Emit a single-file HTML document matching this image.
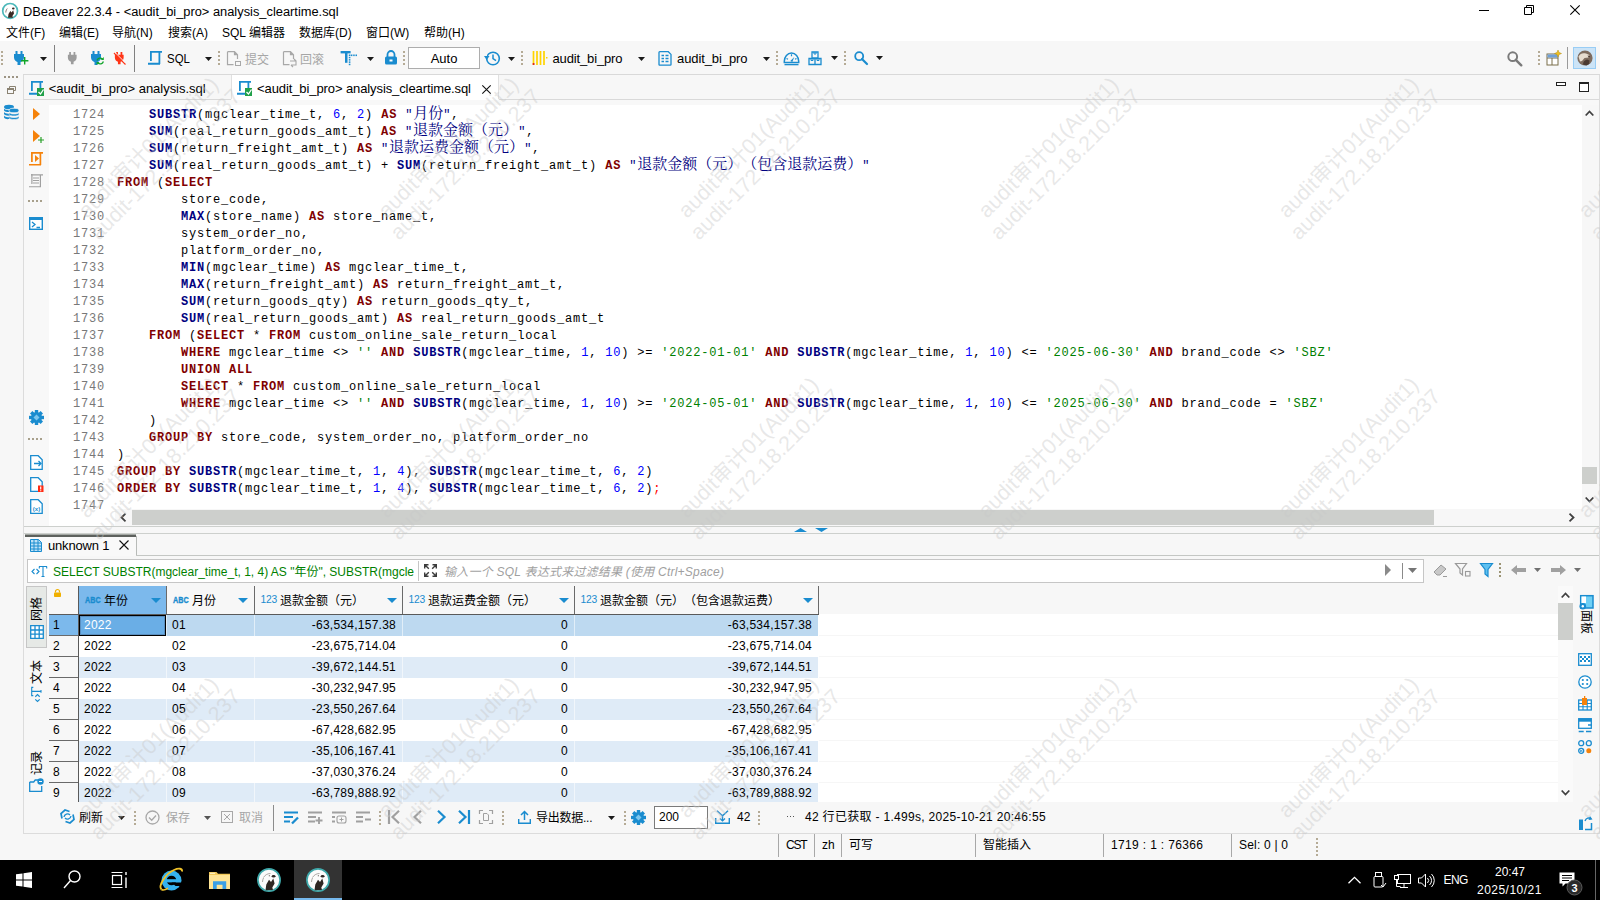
<!DOCTYPE html>
<html lang="zh"><head><meta charset="utf-8"><title>DBeaver</title><style>
*{box-sizing:border-box;margin:0;padding:0}
html,body{width:1600px;height:900px;overflow:hidden;background:#f7f7f7}
body{font-family:"Liberation Sans","Noto Sans CJK SC",sans-serif;font-size:12px;color:#000;position:relative;text-spacing-trim:space-all}
.abs,.t{position:absolute}
.t{white-space:nowrap;line-height:16px;height:16px}
svg{position:absolute;overflow:visible}
#title{left:0;top:0;width:1600px;height:23px;background:#fff}
#menu{left:0;top:23px;width:1600px;height:18px;background:#fff}
#toolbar{left:0;top:41px;width:1600px;height:33px;background:#f7f7f7}
.hl{background:#d4d4d4;height:1px}
.vl{background:#a0a0a0;width:1px}
.code{font-family:"Liberation Mono","Noto Serif CJK SC",monospace;font-size:12px;letter-spacing:0.8px;line-height:17px;height:17px;white-space:pre;position:absolute;color:#000}
.code .k{color:#800000;font-weight:bold}
.code .f{color:#000080;font-weight:bold}
.code .n{color:#0000ff}
.code .s{color:#008000}
.code .q{color:#000080}
.code .c{font-size:15px;letter-spacing:0;line-height:0;text-spacing-trim:space-all;font-kerning:none;font-feature-settings:"chws" 0,"halt" 0,"palt" 0}
.code .r{color:#ff0000}
.ln{color:#787878}
.dis{color:#a0a0a0}
.cell{position:absolute;height:21px;line-height:20px;white-space:nowrap;font-size:12px;letter-spacing:0.25px}
.wm{position:absolute;width:300px;height:48px;text-align:center;color:rgba(200,200,200,0.42);font-size:21.4px;line-height:24px;white-space:nowrap;transform:rotate(-45deg);transform-origin:50% 50%;font-family:"Liberation Sans","Noto Sans CJK SC",sans-serif}
</style></head><body>
<div id="title" class="abs"></div>
<div id="menu" class="abs"></div>
<div id="toolbar" class="abs"></div>
<div class="t" style="left:23px;top:4px;font-size:12.85px">DBeaver 22.3.4 - &lt;audit_bi_pro&gt; analysis_cleartime.sql</div>
<div class="t" style="left:6px;top:25px;">文件(F)</div>
<div class="t" style="left:59px;top:25px;">编辑(E)</div>
<div class="t" style="left:112px;top:25px;">导航(N)</div>
<div class="t" style="left:168px;top:25px;">搜索(A)</div>
<div class="t" style="left:222px;top:25px;">SQL 编辑器</div>
<div class="t" style="left:299px;top:25px;">数据库(D)</div>
<div class="t" style="left:366px;top:25px;">窗口(W)</div>
<div class="t" style="left:424px;top:25px;">帮助(H)</div>
<div class="abs" style="left:23px;top:74px;width:1577px;height:1px;background:#d9d9d9"></div>
<div class="abs" style="left:24px;top:75px;width:1576px;height:25px;background:#f7f7f7"></div>
<div class="abs" style="left:49px;top:105px;width:1533px;height:421px;background:#fff"></div>
<div class="code ln" style="left:73px;top:107px">1724</div>
<div class="code" style="left:117px;top:107px">    <span class="f">SUBSTR</span>(mgclear_time_t, <span class="n">6</span>, <span class="n">2</span>) <span class="k">AS</span> <span class="q">"<span class="c">月份</span>"</span>,</div>
<div class="code ln" style="left:73px;top:124px">1725</div>
<div class="code" style="left:117px;top:124px">    <span class="f">SUM</span>(real_return_goods_amt_t) <span class="k">AS</span> <span class="q">"<span class="c">退款金额（元）</span>"</span>,</div>
<div class="code ln" style="left:73px;top:141px">1726</div>
<div class="code" style="left:117px;top:141px">    <span class="f">SUM</span>(return_freight_amt_t) <span class="k">AS</span> <span class="q">"<span class="c">退款运费金额（元）</span>"</span>,</div>
<div class="code ln" style="left:73px;top:158px">1727</div>
<div class="code" style="left:117px;top:158px">    <span class="f">SUM</span>(real_return_goods_amt_t) + <span class="f">SUM</span>(return_freight_amt_t) <span class="k">AS</span> <span class="q">"<span class="c">退款金额（元）（包含退款运费）</span>"</span></div>
<div class="code ln" style="left:73px;top:175px">1728</div>
<div class="code" style="left:117px;top:175px"><span class="k">FROM</span> (<span class="k">SELECT</span></div>
<div class="code ln" style="left:73px;top:192px">1729</div>
<div class="code" style="left:117px;top:192px">        store_code,</div>
<div class="code ln" style="left:73px;top:209px">1730</div>
<div class="code" style="left:117px;top:209px">        <span class="f">MAX</span>(store_name) <span class="k">AS</span> store_name_t,</div>
<div class="code ln" style="left:73px;top:226px">1731</div>
<div class="code" style="left:117px;top:226px">        system_order_no,</div>
<div class="code ln" style="left:73px;top:243px">1732</div>
<div class="code" style="left:117px;top:243px">        platform_order_no,</div>
<div class="code ln" style="left:73px;top:260px">1733</div>
<div class="code" style="left:117px;top:260px">        <span class="f">MIN</span>(mgclear_time) <span class="k">AS</span> mgclear_time_t,</div>
<div class="code ln" style="left:73px;top:277px">1734</div>
<div class="code" style="left:117px;top:277px">        <span class="f">MAX</span>(return_freight_amt) <span class="k">AS</span> return_freight_amt_t,</div>
<div class="code ln" style="left:73px;top:294px">1735</div>
<div class="code" style="left:117px;top:294px">        <span class="f">SUM</span>(return_goods_qty) <span class="k">AS</span> return_goods_qty_t,</div>
<div class="code ln" style="left:73px;top:311px">1736</div>
<div class="code" style="left:117px;top:311px">        <span class="f">SUM</span>(real_return_goods_amt) <span class="k">AS</span> real_return_goods_amt_t</div>
<div class="code ln" style="left:73px;top:328px">1737</div>
<div class="code" style="left:117px;top:328px">    <span class="k">FROM</span> (<span class="k">SELECT</span> * <span class="k">FROM</span> custom_online_sale_return_local</div>
<div class="code ln" style="left:73px;top:345px">1738</div>
<div class="code" style="left:117px;top:345px">        <span class="k">WHERE</span> mgclear_time &lt;&gt; <span class="s">''</span> <span class="k">AND</span> <span class="f">SUBSTR</span>(mgclear_time, <span class="n">1</span>, <span class="n">10</span>) &gt;= <span class="s">'2022-01-01'</span> <span class="k">AND</span> <span class="f">SUBSTR</span>(mgclear_time, <span class="n">1</span>, <span class="n">10</span>) &lt;= <span class="s">'2025-06-30'</span> <span class="k">AND</span> brand_code &lt;&gt; <span class="s">'SBZ'</span></div>
<div class="code ln" style="left:73px;top:362px">1739</div>
<div class="code" style="left:117px;top:362px">        <span class="k">UNION</span> <span class="k">ALL</span></div>
<div class="code ln" style="left:73px;top:379px">1740</div>
<div class="code" style="left:117px;top:379px">        <span class="k">SELECT</span> * <span class="k">FROM</span> custom_online_sale_return_local</div>
<div class="code ln" style="left:73px;top:396px">1741</div>
<div class="code" style="left:117px;top:396px">        <span class="k">WHERE</span> mgclear_time &lt;&gt; <span class="s">''</span> <span class="k">AND</span> <span class="f">SUBSTR</span>(mgclear_time, <span class="n">1</span>, <span class="n">10</span>) &gt;= <span class="s">'2024-05-01'</span> <span class="k">AND</span> <span class="f">SUBSTR</span>(mgclear_time, <span class="n">1</span>, <span class="n">10</span>) &lt;= <span class="s">'2025-06-30'</span> <span class="k">AND</span> brand_code = <span class="s">'SBZ'</span></div>
<div class="code ln" style="left:73px;top:413px">1742</div>
<div class="code" style="left:117px;top:413px">    )</div>
<div class="code ln" style="left:73px;top:430px">1743</div>
<div class="code" style="left:117px;top:430px">    <span class="k">GROUP</span> <span class="k">BY</span> store_code, system_order_no, platform_order_no</div>
<div class="code ln" style="left:73px;top:447px">1744</div>
<div class="code" style="left:117px;top:447px">)</div>
<div class="code ln" style="left:73px;top:464px">1745</div>
<div class="code" style="left:117px;top:464px"><span class="k">GROUP</span> <span class="k">BY</span> <span class="f">SUBSTR</span>(mgclear_time_t, <span class="n">1</span>, <span class="n">4</span>), <span class="f">SUBSTR</span>(mgclear_time_t, <span class="n">6</span>, <span class="n">2</span>)</div>
<div class="code ln" style="left:73px;top:481px">1746</div>
<div class="code" style="left:117px;top:481px"><span class="k">ORDER</span> <span class="k">BY</span> <span class="f">SUBSTR</span>(mgclear_time_t, <span class="n">1</span>, <span class="n">4</span>), <span class="f">SUBSTR</span>(mgclear_time_t, <span class="n">6</span>, <span class="n">2</span>)<span class="r">;</span></div>
<div class="code ln" style="left:73px;top:498px">1747</div>
<svg style="left:1px;top:2px" width="19" height="19" viewBox="0 0 19 19"><circle cx="9.100" cy="8.900" r="7.400" fill="#fff" stroke="#4db8ba" stroke-width="1.700"/><path d="M7 15.800L7.500 12 9.300 9 10.600 10.400 12.200 8.200 13 11.500 11.400 14 12 15.800z" fill="#3a2a25"/><ellipse cx="12.300" cy="6.500" rx="1.300" ry=".9" fill="#3a2a25"/><path d="M4.800 10.500c0-2 1-3.500 1.500-4" fill="none" stroke="#6a5a55" stroke-width=".8"/></svg>
<div class="abs" style="left:1479px;top:10px;width:10px;height:1px;background:#000"></div>
<svg style="left:1524px;top:5px" width="10" height="10" viewBox="0 0 10 10"><path d="M0.5 2.5h7v7h-7z M2.5 2.5v-2h7v7h-2" fill="none" stroke="#000" stroke-width="1"/></svg>
<svg style="left:1570px;top:5px" width="10" height="10" viewBox="0 0 10 10"><path d="M0.3 0.3l9.4 9.4M9.7 0.300l-9.4 9.4" fill="none" stroke="#000" stroke-width="1.1"/></svg>
<div class="abs" style="left:1px;top:51px;width:2px;height:2px;background:#b5ab96"></div><div class="abs" style="left:1px;top:55px;width:2px;height:2px;background:#b5ab96"></div><div class="abs" style="left:1px;top:59px;width:2px;height:2px;background:#b5ab96"></div><div class="abs" style="left:1px;top:63px;width:2px;height:2px;background:#b5ab96"></div>
<svg style="left:13px;top:51px" width="12" height="14" viewBox="0 0 12 14"><path d="M2.500 0h2v3h3V0h2v3H11v3.500c0 2.500-2 4-3.500 4.500v3h-3v-3C3 10.500 1 9 1 6.500V3h1.500z" fill="#1a8ccf"/></svg>
<svg style="left:20.7px;top:57.3px" width="7.4" height="7.4" viewBox="0 0 7.4 7.4"><path d="M3.700 0v7.400M0 3.700h7.400" stroke="#10a52a" stroke-width="1.400" fill="none"/></svg>
<svg style="left:40.0px;top:57.0px" width="7" height="4"><polygon points="0,0 7,0 3.5,4" fill="#1a1a1a"/></svg>
<div class="abs" style="left:54px;top:45px;width:1px;height:27px;background:#808080"></div>
<svg style="left:67px;top:52px" width="10.5" height="12.3" viewBox="0 0 12 14"><path d="M2.500 0h2v3h3V0h2v3H11v3.500c0 2.500-2 4-3.500 4.500v3h-3v-3C3 10.500 1 9 1 6.500V3h1.500z" fill="#9c9c9c"/></svg>
<svg style="left:89.5px;top:51px" width="12" height="14" viewBox="0 0 12 14"><path d="M2.500 0h2v3h3V0h2v3H11v3.500c0 2.500-2 4-3.500 4.500v3h-3v-3C3 10.500 1 9 1 6.500V3h1.500z" fill="#1a8ccf"/></svg>
<svg style="left:95.8px;top:57px" width="8.4" height="8" viewBox="0 0 8.4 8"><path d="M1 3.500a3.300 3.300 0 0 1 5.500-1.500M7.400 4.500a3.300 3.300 0 0 1-5.500 1.500" stroke="#10a52a" stroke-width="1.300" fill="none"/><path d="M7.800 0v3h-3zM0.600 8v-3h3z" fill="#10a52a"/></svg>
<svg style="left:114px;top:52px" width="10.5" height="12.3" viewBox="0 0 12 14"><path d="M2.500 0h2v3h3V0h2v3H11v3.500c0 2.500-2 4-3.500 4.500v3h-3v-3C3 10.500 1 9 1 6.500V3h1.500z" fill="#ff3416"/></svg>
<svg style="left:113.5px;top:52.5px" width="12" height="12" viewBox="0 0 12 12"><path d="M0 0L11.500 11.500" stroke="#ff3416" stroke-width="1.300"/><path d="M1.300 -.3L12 10.400" stroke="#f7f7f7" stroke-width=".9"/></svg>
<div class="abs" style="left:134px;top:45px;width:1px;height:27px;background:#808080"></div>
<svg style="left:148px;top:50px" width="15" height="15" viewBox="0 0 15 15"><path d="M2 1.850H14M2.900 1V11M11.400 2V14M0 13.750H12" fill="none" stroke="#1a8ccf" stroke-width="1.8"/></svg>
<div class="t" style="left:167.3px;top:51px;font-size:13px;transform:scaleX(0.8802);transform-origin:0 0">SQL</div>
<svg style="left:205.0px;top:56.5px" width="7" height="4"><polygon points="0,0 7,0 3.5,4" fill="#1a1a1a"/></svg>
<div class="abs" style="left:218px;top:51px;width:2px;height:2px;background:#b5ab96"></div><div class="abs" style="left:218px;top:55px;width:2px;height:2px;background:#b5ab96"></div><div class="abs" style="left:218px;top:59px;width:2px;height:2px;background:#b5ab96"></div><div class="abs" style="left:218px;top:63px;width:2px;height:2px;background:#b5ab96"></div>
<svg style="left:226px;top:51px" width="15" height="15" viewBox="0 0 15 15"><path d="M1.500 0.700h7l3 3V8M8.500 0.700v3h3M1.500 0.700v13h6" fill="none" stroke="#a8a8a8" stroke-width="1.2"/></svg>
<div class="abs" style="left:235px;top:61px;width:5.5px;height:5px;border:1.2px solid #a8a8a8;background:#f7f7f7"></div>
<div class="t" style="left:245px;top:52px;color:#a6a6a6">提交</div>
<svg style="left:282px;top:51px" width="15" height="15" viewBox="0 0 15 15"><path d="M1.500 0.700h7l3 3V8M8.500 0.700v3h3M1.500 0.700v13h6" fill="none" stroke="#a8a8a8" stroke-width="1.2"/></svg>
<svg style="left:290px;top:59px" width="8" height="8" viewBox="0 0 8 8"><path d="M0 2h6v4H1M6 2l-2-2M1 6l2 2" fill="none" stroke="#a8a8a8" stroke-width="1.1"/></svg>
<div class="t" style="left:300px;top:52px;color:#a6a6a6">回滚</div>
<svg style="left:340px;top:50px" width="17" height="16" viewBox="0 0 17 16"><rect x="0.600" y="1" width="10" height="2.400" fill="#1a8ccf"/><rect x="5" y="1" width="2.500" height="11.800" fill="#1a8ccf"/><g fill="#1a8ccf"><rect x="10.900" y="4.500" width="1.500" height="1.600"/><rect x="13.200" y="4.500" width="1.500" height="1.600"/><rect x="15.500" y="4.500" width="1.500" height="1.600"/><rect x="8.800" y="4.500" width="1.600" height="1.500"/><rect x="8.800" y="6.800" width="1.600" height="1.500"/><rect x="8.800" y="9.100" width="1.600" height="1.500"/><rect x="8.800" y="11.400" width="1.600" height="1.500"/><rect x="8.800" y="13.700" width="1.600" height="1.500"/></g></svg>
<svg style="left:367.0px;top:56.5px" width="7" height="4"><polygon points="0,0 7,0 3.5,4" fill="#1a1a1a"/></svg>
<svg style="left:384px;top:50px" width="14" height="15" viewBox="0 0 14 15"><path d="M3.500 7V4.500a3.500 3.500 0 0 1 7 0V7" fill="none" stroke="#1a8ccf" stroke-width="1.800"/><rect x="1" y="6.500" width="12" height="8" rx="1.500" fill="#1a8ccf"/><rect x="5.500" y="9.500" width="3" height="2" fill="#fff"/></svg>
<div class="abs" style="left:403px;top:51px;width:2px;height:2px;background:#b5ab96"></div><div class="abs" style="left:403px;top:55px;width:2px;height:2px;background:#b5ab96"></div><div class="abs" style="left:403px;top:59px;width:2px;height:2px;background:#b5ab96"></div><div class="abs" style="left:403px;top:63px;width:2px;height:2px;background:#b5ab96"></div>
<div class="abs" style="left:408px;top:47px;width:72px;height:22px;background:#fff;border:1px solid #adadad"></div>
<div class="t" style="left:408px;top:51px;width:72px;text-align:center;font-size:13px">Auto</div>
<svg style="left:484px;top:50px" width="17" height="17" viewBox="0 0 17 17"><circle cx="9" cy="8.500" r="6.300" fill="none" stroke="#1a8ccf" stroke-width="1.600"/><path d="M9 4.500v4.200l3 2" fill="none" stroke="#1a8ccf" stroke-width="1.500"/><path d="M0 6h5.500L2.700 10z" fill="#1a8ccf"/><rect x="0" y="3" width="3" height="3" fill="#f7f7f7"/></svg>
<svg style="left:508.0px;top:56.5px" width="7" height="4"><polygon points="0,0 7,0 3.5,4" fill="#1a1a1a"/></svg>
<div class="abs" style="left:521px;top:51px;width:2px;height:2px;background:#b5ab96"></div><div class="abs" style="left:521px;top:55px;width:2px;height:2px;background:#b5ab96"></div><div class="abs" style="left:521px;top:59px;width:2px;height:2px;background:#b5ab96"></div><div class="abs" style="left:521px;top:63px;width:2px;height:2px;background:#b5ab96"></div>
<svg style="left:532px;top:51px" width="16" height="15" viewBox="0 0 16 15"><path d="M1.500 0v14M5 0v14M8.500 0v14M12 0v14" stroke="#ffd400" stroke-width="1.700"/><rect x="0.700" y="12" width="1.700" height="2" fill="#e02020"/><rect x="14" y="6" width="1.500" height="1.500" fill="#ffd400"/></svg>
<div class="t" style="left:552.5px;top:51px;font-size:13px;letter-spacing:-0.1420px">audit_bi_pro</div>
<svg style="left:637.5px;top:56.5px" width="7" height="4"><polygon points="0,0 7,0 3.5,4" fill="#1a1a1a"/></svg>
<svg style="left:658px;top:51px" width="14" height="15" viewBox="0 0 14 15"><path d="M1 1.500c0-.5.300-.800.800-.800h8.500l2.700 2.700v10c0 .500-.300.800-.800.800H1.800c-.5 0-.8-.3-.8-.8z" fill="none" stroke="#1a8ccf" stroke-width="1.300"/><path d="M3.500 4.500h2.500M3.500 7.500h2.500M3.500 10.500h2.500M7.500 4.500h3M7.500 7.500h3M7.500 10.500h3" stroke="#1a8ccf" stroke-width="1.300"/></svg>
<div class="t" style="left:677px;top:51px;font-size:13px;letter-spacing:-0.0966px">audit_bi_pro</div>
<svg style="left:762.5px;top:56.5px" width="7" height="4"><polygon points="0,0 7,0 3.5,4" fill="#1a1a1a"/></svg>
<div class="abs" style="left:776px;top:51px;width:2px;height:2px;background:#b5ab96"></div><div class="abs" style="left:776px;top:55px;width:2px;height:2px;background:#b5ab96"></div><div class="abs" style="left:776px;top:59px;width:2px;height:2px;background:#b5ab96"></div><div class="abs" style="left:776px;top:63px;width:2px;height:2px;background:#b5ab96"></div>
<svg style="left:783px;top:51px" width="17" height="15" viewBox="0 0 17 15"><path d="M1.300 10.300a7.200 8.300 0 0 1 14.400 0v1.200h-14.400z" fill="none" stroke="#1a8ccf" stroke-width="1.500"/><path d="M1.500 13.600h14" stroke="#1a8ccf" stroke-width="1.400"/><path d="M8.500 3.200v2M3.500 7.500l1.500.800M13.500 7.500l-1.500.800" stroke="#1a8ccf" stroke-width="1.200"/><path d="M7.300 10l4-4-2 5z" fill="#1a8ccf"/></svg>
<svg style="left:808px;top:51px" width="14" height="15" viewBox="0 0 14 15"><path d="M4 1h6v6H4zM1 7.500h6v6H1zM7 7.500h6v6H7z" fill="none" stroke="#1a8ccf" stroke-width="1.300"/><path d="M6 1v2h2V1M3 7.500v2h2v-2M9 7.500v2h2v-2" fill="none" stroke="#1a8ccf" stroke-width="1"/></svg>
<svg style="left:831.0px;top:56.0px" width="7" height="4"><polygon points="0,0 7,0 3.5,4" fill="#1a1a1a"/></svg>
<div class="abs" style="left:844px;top:51px;width:2px;height:2px;background:#b5ab96"></div><div class="abs" style="left:844px;top:55px;width:2px;height:2px;background:#b5ab96"></div><div class="abs" style="left:844px;top:59px;width:2px;height:2px;background:#b5ab96"></div><div class="abs" style="left:844px;top:63px;width:2px;height:2px;background:#b5ab96"></div>
<svg style="left:854px;top:51px" width="14.0" height="14.0" viewBox="0 0 14 14"><circle cx="5.200" cy="5.200" r="4" fill="none" stroke="#1a8ccf" stroke-width="1.800"/><path d="M8 8l5 5" stroke="#1a8ccf" stroke-width="2.200" stroke-linecap="round"/></svg>
<svg style="left:876.0px;top:56.0px" width="7" height="4"><polygon points="0,0 7,0 3.5,4" fill="#1a1a1a"/></svg>
<svg style="left:1507px;top:51px" width="15.400000000000002" height="15.400000000000002" viewBox="0 0 14 14"><circle cx="5.200" cy="5.200" r="4" fill="none" stroke="#7a7a7a" stroke-width="1.800"/><path d="M8 8l5 5" stroke="#7a7a7a" stroke-width="2.200" stroke-linecap="round"/></svg>
<div class="abs" style="left:1538px;top:51px;width:2px;height:2px;background:#b5ab96"></div><div class="abs" style="left:1538px;top:55px;width:2px;height:2px;background:#b5ab96"></div><div class="abs" style="left:1538px;top:59px;width:2px;height:2px;background:#b5ab96"></div><div class="abs" style="left:1538px;top:63px;width:2px;height:2px;background:#b5ab96"></div>
<svg style="left:1546px;top:50px" width="16" height="16" viewBox="0 0 16 16"><rect x="1" y="4" width="11" height="11" fill="#fff" stroke="#7a6f4a" stroke-width="1"/><path d="M1 8h11M6 8v7" stroke="#7a6f4a" stroke-width="1"/><rect x="1.500" y="4.500" width="10" height="3" fill="#6fa0d8"/><path d="M12 0l1 2.500 2.500 1-2.500 1-1 2.500-1-2.500-2.500-1 2.500-1z" fill="#f0c020" stroke="#b08a10" stroke-width=".5"/></svg>
<div class="abs" style="left:1567px;top:47px;width:1px;height:22px;background:#9a9a9a"></div>
<div class="abs" style="left:1573px;top:47px;width:23px;height:22px;background:#cce4f7;border:1px solid #99cdf5"></div>
<svg style="left:1577px;top:50px" width="17" height="17" viewBox="0 0 17 17"><circle cx="8" cy="8" r="7.600" fill="#7d6b5e"/><path d="M1.500 6.500C3 3.500 6 2.500 9 3.500l3.500 1.500-1 2.500-4 .500-2.500 3-2 .500z" fill="#e6dccf"/><path d="M6 14.500c0-2.500 1.500-4.500 4-5l2.500 1-.5 3.500-2.500 1.500z" fill="#4a3a32"/><path d="M10.500 5.500l2.500.500-1 1.500z" fill="#3a2a25"/></svg>
<div class="abs" style="left:4px;top:76px;width:2px;height:2px;background:#9c9484"></div>
<div class="abs" style="left:8px;top:76px;width:2px;height:2px;background:#9c9484"></div>
<div class="abs" style="left:12px;top:76px;width:2px;height:2px;background:#9c9484"></div>
<div class="abs" style="left:16px;top:76px;width:2px;height:2px;background:#9c9484"></div>
<svg style="left:7px;top:86px" width="9" height="8" viewBox="0 0 9 8"><path d="M2.500 2.500v-2h6v4h-2" fill="none" stroke="#8a8272" stroke-width="1"/><rect x="0.500" y="2.500" width="6" height="5" fill="none" stroke="#8a8272" stroke-width="1"/><path d="M0.500 3.500h6" stroke="#8a8272" stroke-width="1"/></svg>
<svg style="left:4px;top:104px" width="15" height="16" viewBox="0 0 15 16"><g fill="#1a8ccf"><ellipse cx="5" cy="3" rx="5" ry="2.300"/><path d="M0 4.500c1 2 9 2 10 0v2c-1 2-9 2-10 0zM0 8c1 2 6 2 7 1v2c-1 1-6 1-7-1zM0 11.500c1 2 5 2 6 1v2c-1 1-5 1-6-1z"/><ellipse cx="10" cy="6.500" rx="5" ry="2.300" stroke="#f7f7f7" stroke-width=".8"/><path d="M5 8.500c1 2 9 2 10 0v2c-1 2-9 2-10 0zM5 12c1 2 9 2 10 0v2c-1 2-9 2-10 0z" stroke="#f7f7f7" stroke-width=".6"/></g></svg>
<div class="abs" style="left:23px;top:75px;width:1px;height:759px;background:#dcdcdc"></div>
<div class="abs" style="left:1599px;top:75px;width:1px;height:759px;background:#dcdcdc"></div>
<div class="abs" style="left:24px;top:75px;width:207px;height:24px;background:#f7f7f7"></div>
<div class="abs" style="left:232px;top:75px;width:266px;height:25px;background:#fff"></div>
<div class="abs" style="left:231px;top:75px;width:1px;height:24px;background:#e0e0e0"></div>
<div class="abs" style="left:498px;top:75px;width:1px;height:24px;background:#e0e0e0"></div>
<div class="abs" style="left:24px;top:99px;width:207px;height:1px;background:#d9d9d9"></div>
<div class="abs" style="left:499px;top:99px;width:1100px;height:1px;background:#d9d9d9"></div>
<div class="abs" style="left:24px;top:100px;width:1575px;height:5px;background:#f8f8f8"></div>
<div class="abs" style="left:24px;top:105px;width:25px;height:421px;background:#f8f8f8"></div>
<svg style="left:29px;top:80px" width="15" height="15" viewBox="0 0 15 15"><path d="M2 1.850H14M2.900 1V11M11.400 2V14M0 13.750H12" fill="none" stroke="#1a8ccf" stroke-width="1.8"/></svg>
<div class="abs" style="left:37px;top:88px;width:7px;height:8px;background:#21a04a"></div>
<svg style="left:38px;top:89px" width="6" height="6" viewBox="0 0 6 6"><path d="M0.500 3l2 2 3-4.500" fill="none" stroke="#fff" stroke-width="1.300"/></svg>
<div class="t" style="left:48.8px;top:81px;font-size:13px;letter-spacing:-0.0293px">&lt;audit_bi_pro&gt; analysis.sql</div>
<svg style="left:237px;top:80px" width="15" height="15" viewBox="0 0 15 15"><path d="M2 1.850H14M2.900 1V11M11.400 2V14M0 13.750H12" fill="none" stroke="#1a8ccf" stroke-width="1.8"/></svg>
<div class="abs" style="left:245px;top:88px;width:7px;height:8px;background:#21a04a"></div>
<svg style="left:246px;top:89px" width="6" height="6" viewBox="0 0 6 6"><path d="M0.500 3l2 2 3-4.500" fill="none" stroke="#fff" stroke-width="1.300"/></svg>
<div class="t" style="left:257px;top:81px;font-size:13px;letter-spacing:-0.0977px">&lt;audit_bi_pro&gt; analysis_cleartime.sql</div>
<svg style="left:481.5px;top:84.5px" width="9" height="9" viewBox="0 0 9 9"><path d="M0.300 0.300l8.400 8.400M8.700 0.300l-8.400 8.400" stroke="#111" stroke-width="1.100"/></svg>
<div class="abs" style="left:1556px;top:82px;width:10px;height:4px;border:1px solid #222;background:#fff"></div>
<div class="abs" style="left:1579px;top:82px;width:10px;height:10px;border:1px solid #222;border-top-width:2px;background:#fff"></div>
<svg style="left:33px;top:108px" width="7" height="12" viewBox="0 0 7 12"><polygon points="0,0 7,6.0 0,12" fill="#f5820a"/></svg>
<svg style="left:33px;top:130px" width="7" height="12" viewBox="0 0 7 12"><polygon points="0,0 7,6.0 0,12" fill="#f5820a"/></svg>
<svg style="left:38px;top:137px" width="6" height="6" viewBox="0 0 6 6"><path d="M3 0v6M0 3h6" stroke="#2aa12a" stroke-width="1.200"/></svg>
<svg style="left:29px;top:151px" width="15" height="15" viewBox="0 0 15 15"><path d="M2 1.850H14M2.900 1V11M11.400 2V14M0 13.750H12" fill="none" stroke="#f5820a" stroke-width="1.7"/></svg>
<svg style="left:35px;top:155px" width="4" height="7" viewBox="0 0 4 7"><polygon points="0,0 4,3.5 0,7" fill="#f5820a"/></svg>
<svg style="left:29px;top:173px" width="15" height="15" viewBox="0 0 15 15"><path d="M2 1.850H14M2.900 1V11M11.400 2V14M0 13.750H12" fill="none" stroke="#a0a0a0" stroke-width="1.2"/></svg>
<svg style="left:33px;top:177px" width="7" height="8" viewBox="0 0 7 8"><path d="M0 1h6M0 3.500h6M0 6h6" stroke="#a0a0a0" stroke-width="1"/></svg>
<div class="abs" style="left:28px;top:200px;width:2px;height:2px;background:#a8a08c"></div>
<div class="abs" style="left:32px;top:200px;width:2px;height:2px;background:#a8a08c"></div>
<div class="abs" style="left:36px;top:200px;width:2px;height:2px;background:#a8a08c"></div>
<div class="abs" style="left:40px;top:200px;width:2px;height:2px;background:#a8a08c"></div>
<svg style="left:29px;top:217px" width="14" height="13" viewBox="0 0 14 13"><rect x="0.700" y="0.700" width="12.600" height="11.600" fill="#fff" stroke="#1a8ccf" stroke-width="1.400"/><rect x="0" y="0" width="14" height="3" fill="#1a8ccf"/><path d="M3 5l3 2.500-3 2.500M7.500 10.500h3.500" fill="none" stroke="#1a8ccf" stroke-width="1.300"/></svg>
<svg style="left:29px;top:410px" width="15" height="15" viewBox="0 0 15 15"><g transform="translate(7.500 7.500)"><rect x="-1.700" y="-7.500" width="3.400" height="4" fill="#1a8ccf" transform="rotate(0)"/><rect x="-1.700" y="-7.500" width="3.400" height="4" fill="#1a8ccf" transform="rotate(45)"/><rect x="-1.700" y="-7.500" width="3.400" height="4" fill="#1a8ccf" transform="rotate(90)"/><rect x="-1.700" y="-7.500" width="3.400" height="4" fill="#1a8ccf" transform="rotate(135)"/><rect x="-1.700" y="-7.500" width="3.400" height="4" fill="#1a8ccf" transform="rotate(180)"/><rect x="-1.700" y="-7.500" width="3.400" height="4" fill="#1a8ccf" transform="rotate(225)"/><rect x="-1.700" y="-7.500" width="3.400" height="4" fill="#1a8ccf" transform="rotate(270)"/><rect x="-1.700" y="-7.500" width="3.400" height="4" fill="#1a8ccf" transform="rotate(315)"/><circle r="5.500" fill="#1a8ccf"/><path d="M0-3L3 0 0 3-3 0z" fill="#7cc6ee"/></g></svg>
<div class="abs" style="left:28px;top:438px;width:2px;height:2px;background:#a8a08c"></div>
<div class="abs" style="left:32px;top:438px;width:2px;height:2px;background:#a8a08c"></div>
<div class="abs" style="left:36px;top:438px;width:2px;height:2px;background:#a8a08c"></div>
<div class="abs" style="left:40px;top:438px;width:2px;height:2px;background:#a8a08c"></div>
<svg style="left:30px;top:455px" width="13" height="15" viewBox="0 0 13 15"><path d="M0.700 0.700h7.500l4 4v9.600H0.700z" fill="#fff" stroke="#1a8ccf" stroke-width="1.300"/><path d="M4 8.500h7M8.500 6l2.500 2.500-2.500 2.500" fill="none" stroke="#1a8ccf" stroke-width="1.300"/></svg>
<svg style="left:30px;top:477px" width="13" height="15" viewBox="0 0 13 15"><path d="M0.700 0.700h7.500l4 4v9.600H0.700z" fill="#fff" stroke="#1a8ccf" stroke-width="1.300"/><rect x="8" y="8.500" width="5.500" height="6.500" fill="#ff2a12"/><path d="M10.700 9.500v3M10.700 13.200v1" stroke="#fff" stroke-width="1.200"/></svg>
<svg style="left:30px;top:499px" width="13" height="15" viewBox="0 0 13 15"><path d="M0.700 0.700h7.500l4 4v9.600H0.700z" fill="#fff" stroke="#1a8ccf" stroke-width="1.300"/><text x="6.500" y="11.500" font-size="6" font-family="Liberation Sans,sans-serif" fill="#1a8ccf" text-anchor="middle" font-weight="bold">(x)</text></svg>
<div class="abs" style="left:49px;top:509px;width:1533px;height:17px;background:#fff"></div>
<div class="abs" style="left:115px;top:509px;width:1467px;height:17px;background:#f7f7f7"></div>
<div class="abs" style="left:132px;top:510px;width:1302px;height:15px;background:#cdcfcc"></div>
<svg style="left:120px;top:513px" width="6" height="9" viewBox="0 0 6 9"><path d="M5.500 0.700L1.500 4.500l4 3.800" fill="none" stroke="#404040" stroke-width="1.800"/></svg>
<svg style="left:1569px;top:513px" width="6" height="9" viewBox="0 0 6 9"><path d="M0.500 0.700L4.500 4.500l-4 3.800" fill="none" stroke="#404040" stroke-width="1.800"/></svg>
<div class="abs" style="left:1564px;top:105px;width:18px;height:404px;background:#fff"></div>
<div class="abs" style="left:1582px;top:105px;width:16px;height:421px;background:#f7f7f7"></div>
<div class="abs" style="left:1582px;top:467px;width:15px;height:17px;background:#cdcfcc"></div>
<svg style="left:1585px;top:110px" width="9" height="6" viewBox="0 0 9 6"><path d="M0.700 5.500L4.500 1.500l3.800 4" fill="none" stroke="#404040" stroke-width="1.800"/></svg>
<svg style="left:1585px;top:497px" width="9" height="6" viewBox="0 0 9 6"><path d="M0.700 0.500L4.500 4.500l3.800-4" fill="none" stroke="#404040" stroke-width="1.800"/></svg>
<div class="abs" style="left:24px;top:526px;width:1575px;height:1px;background:#cdd0cd"></div>
<div class="abs" style="left:24px;top:527px;width:1575px;height:6px;background:#f7f7f7"></div>
<div class="abs" style="left:24px;top:533px;width:1575px;height:1px;background:#cdd0cd"></div>
<svg style="left:794px;top:528px" width="13" height="4" viewBox="0 0 13 4"><polygon points="0,4 6.500,0 13,4" fill="#1a8ccf"/></svg>
<svg style="left:815px;top:528px" width="13" height="4" viewBox="0 0 13 4"><polygon points="0,0 13,0 6.500,4" fill="#1a8ccf"/></svg>
<div class="abs" style="left:24px;top:534px;width:1575px;height:22px;background:#f7f7f7"></div>
<div class="abs" style="left:25px;top:534px;width:111px;height:22px;background:#f9f9f9"></div>
<div class="abs" style="left:25px;top:534px;width:111px;height:1px;background:#a4a8a4"></div>
<div class="abs" style="left:25px;top:535px;width:111px;height:2px;background:#5d615d"></div>
<div class="abs" style="left:136px;top:536px;width:1px;height:20px;background:#b8bbb8"></div>
<div class="abs" style="left:136px;top:555px;width:1463px;height:1px;background:#c4c7c4"></div>
<svg style="left:30px;top:539px" width="12" height="13" viewBox="0 0 12 13"><path d="M0.500 0.500h8l3 3v9h-11z" fill="#bfe2f7" stroke="#1a8ccf" stroke-width="1"/><path d="M0.500 4h11M0.500 7h11M0.500 10h11M4 0.500v12M8 0.500v12" stroke="#1a8ccf" stroke-width="1"/></svg>
<div class="t" style="left:48px;top:538px;font-size:13px;letter-spacing:-0.1863px">unknown 1</div>
<svg style="left:119px;top:540px" width="10" height="10" viewBox="0 0 10 10"><path d="M0.500 0.500l9 9M9.500 0.500l-9 9" stroke="#111" stroke-width="1.100"/></svg>
<div class="abs" style="left:27px;top:559px;width:1397px;height:24px;background:#fff;border:1px solid #c6c6c6"></div>
<svg style="left:31px;top:565px" width="16" height="12" viewBox="0 0 16 12"><path d="M3.500 4L1 6.500 3.500 9M5.500 4L8 6.500 5.500 9" fill="none" stroke="#1a8ccf" stroke-width="1.100"/><path d="M8 1.500h8M12 1.500v10M10.500 11.500h3M8.300 1.500v2M15.700 1.500v2" fill="none" stroke="#1a8ccf" stroke-width="1.100"/></svg>
<div class="t" style="left:53px;top:564px;color:#008000;letter-spacing:-0.0011px">SELECT SUBSTR(mgclear_time_t, 1, 4) AS "年份", SUBSTR(mgcle</div>
<div class="abs" style="left:418px;top:561px;width:1px;height:20px;background:#c6c6c6"></div>
<svg style="left:424px;top:564px" width="13" height="13" viewBox="0 0 13 13"><path d="M0.700 4.500V0.700H4.500M8.500 0.700h3.800V4.500M12.300 8.500v3.800H8.500M4.500 12.300H0.700V8.500M1 1l3.800 3.800M12 1L8.200 4.800M12 12L8.200 8.200M1 12l3.800-3.800" fill="none" stroke="#3c3c3c" stroke-width="1.400"/></svg>
<div class="t" style="left:444px;top:564px;color:#a0a0a0;font-style:italic;letter-spacing:0.2241px">输入一个 SQL 表达式来过滤结果 (使用 Ctrl+Space)</div>
<svg style="left:1385px;top:564px" width="6" height="12" viewBox="0 0 6 12"><polygon points="0,0 6,6.0 0,12" fill="#8a8a8a"/></svg>
<div class="abs" style="left:1402px;top:563px;width:1px;height:16px;background:#8a8a8a"></div>
<svg style="left:1407.5px;top:568.0px" width="9" height="5"><polygon points="0,0 9,0 4.5,5" fill="#757575"/></svg>
<svg style="left:1433px;top:563px" width="15" height="14" viewBox="0 0 15 14"><path d="M1 9l7-7 5 4-6 6H4z" fill="#c8c8c8" stroke="#9a9a9a" stroke-width="1"/><path d="M10 13.500h4" stroke="#9a9a9a" stroke-width="1"/></svg>
<svg style="left:1455px;top:563px" width="16" height="15" viewBox="0 0 16 15"><path d="M0.500 0.500h11L7.500 6v6L5 10V6z" fill="#f7f7f7" stroke="#9a9a9a" stroke-width="1.200"/><rect x="10.500" y="8.500" width="4.500" height="4.500" fill="#f7f7f7" stroke="#9a9a9a" stroke-width="1.100"/></svg>
<svg style="left:1480px;top:563px" width="13" height="15" viewBox="0 0 13 15"><path d="M0.500 0.500h12L8 6.500v7L5 11V6.500z" fill="#5ec0f0" stroke="#1a8ccf" stroke-width="1.200"/></svg>
<div class="abs" style="left:1499px;top:563px;width:2px;height:2px;background:#9c9474"></div><div class="abs" style="left:1499px;top:567px;width:2px;height:2px;background:#9c9474"></div><div class="abs" style="left:1499px;top:571px;width:2px;height:2px;background:#9c9474"></div><div class="abs" style="left:1499px;top:575px;width:2px;height:2px;background:#9c9474"></div>
<svg style="left:1511px;top:565px" width="15" height="10" viewBox="0 0 15 10"><path d="M0 5l6-5v3h9v4H6v3z" fill="#a0a0a0"/></svg>
<svg style="left:1534.0px;top:568.0px" width="7" height="4"><polygon points="0,0 7,0 3.5,4" fill="#707070"/></svg>
<svg style="left:1551px;top:565px" width="15" height="10" viewBox="0 0 15 10"><path d="M15 5l-6-5v3H0v4h9v3z" fill="#a0a0a0"/></svg>
<svg style="left:1574.0px;top:568.0px" width="7" height="4"><polygon points="0,0 7,0 3.5,4" fill="#707070"/></svg>
<div class="abs" style="left:24px;top:586px;width:25px;height:216px;background:#f7f7f7"></div>
<div class="abs" style="left:26px;top:586px;width:21px;height:62px;background:#e6e9e6;border:1px solid #c6c6c6"></div>
<div class="t" style="left:36.5px;top:609px;width:0;height:0;"><div style="position:absolute;left:-30px;top:-8px;width:60px;height:16px;line-height:16px;text-align:center;transform:rotate(-90deg)">网格</div></div>
<svg style="left:30px;top:625px" width="14" height="14" viewBox="0 0 14 14"><path d="M0.700 0.700h12.600v12.600H0.700zM0.700 5h12.600M0.700 9.200h12.600M5 0.700v12.600M9.200 0.700v12.600" fill="#fff" stroke="#1a8ccf" stroke-width="1.300"/></svg>
<div class="t" style="left:36.5px;top:672px;width:0;height:0;"><div style="position:absolute;left:-30px;top:-8px;width:60px;height:16px;line-height:16px;text-align:center;transform:rotate(-90deg)">文本</div></div>
<svg style="left:29px;top:686px" width="14" height="17" viewBox="0 0 14 17"><path d="M4.300 1.400H2.700V9.600H4.300M2.700 5.400H12M12 4V6.800" fill="none" stroke="#1a8ccf" stroke-width="1.100"/><path d="M6.300 10.700L8.500 8.600L10.700 10.700M6.300 13.400L8.500 15.500L10.700 13.400" fill="none" stroke="#1a8ccf" stroke-width="1.200"/></svg>
<div class="t" style="left:36.5px;top:763px;width:0;height:0;"><div style="position:absolute;left:-30px;top:-8px;width:60px;height:16px;line-height:16px;text-align:center;transform:rotate(-90deg)">记录</div></div>
<svg style="left:29px;top:778px" width="15" height="14" viewBox="0 0 15 14"><path d="M0.700 4h4l1.500-2h3M0.700 4v9.300h12V8" fill="none" stroke="#1a8ccf" stroke-width="1.300"/><circle cx="11.500" cy="3.500" r="3.200" fill="#1a8ccf"/><path d="M10 3.500h3" stroke="#fff" stroke-width="1"/></svg>
<div class="abs" style="left:49px;top:586px;width:1509px;height:216px;background:#fff"></div>
<div class="abs" style="left:49px;top:586px;width:1509px;height:28px;background:#f7f7f7"></div>
<div class="abs" style="left:49px;top:586px;width:29px;height:216px;background:#f7f7f7"></div>
<div class="abs" style="left:78px;top:586px;width:88px;height:28px;background:#7cb9ec"></div>
<svg style="left:54px;top:589px" width="7" height="8" viewBox="0 0 7 8"><path d="M1.500 3.500V2.500a2 2 0 0 1 4 0v1" fill="none" stroke="#f0b000" stroke-width="1.200"/><rect x="0" y="3.500" width="7" height="4.500" rx=".8" fill="#f0b000"/></svg>
<div class="t" style="left:85px;top:592px;font-size:9px;color:#1a8ccf;font-weight:bold;-webkit-text-stroke:0.35px #1a8ccf;transform:scaleX(.8);transform-origin:0 0">ABC</div>
<div class="t" style="left:104px;top:593px;">年份</div>
<svg style="left:151.0px;top:598.0px" width="10" height="5"><polygon points="0,0 10,0 5.0,5" fill="#1a8ccf"/></svg>
<div class="t" style="left:173px;top:592px;font-size:9px;color:#1a8ccf;font-weight:bold;-webkit-text-stroke:0.35px #1a8ccf;transform:scaleX(.8);transform-origin:0 0">ABC</div>
<div class="t" style="left:192px;top:593px;">月份</div>
<svg style="left:238.0px;top:598.0px" width="10" height="5"><polygon points="0,0 10,0 5.0,5" fill="#1a8ccf"/></svg>
<div class="t" style="left:260.6px;top:592px;font-size:10.3px;color:#1a8ccf;letter-spacing:-0.3px">123</div>
<div class="t" style="left:280px;top:593px;">退款金额（元）</div>
<svg style="left:387.0px;top:598.0px" width="10" height="5"><polygon points="0,0 10,0 5.0,5" fill="#1a8ccf"/></svg>
<div class="t" style="left:408.6px;top:592px;font-size:10.3px;color:#1a8ccf;letter-spacing:-0.3px">123</div>
<div class="t" style="left:428px;top:593px;">退款运费金额（元）</div>
<svg style="left:559.0px;top:598.0px" width="10" height="5"><polygon points="0,0 10,0 5.0,5" fill="#1a8ccf"/></svg>
<div class="t" style="left:580.6px;top:592px;font-size:10.3px;color:#1a8ccf;letter-spacing:-0.3px">123</div>
<div class="t" style="left:600px;top:593px;">退款金额（元）（包含退款运费）</div>
<svg style="left:803.0px;top:598.0px" width="10" height="5"><polygon points="0,0 10,0 5.0,5" fill="#1a8ccf"/></svg>
<div class="abs" style="left:166px;top:586px;width:1px;height:28px;background:#6a6a6a"></div>
<div class="abs" style="left:254px;top:586px;width:1px;height:28px;background:#6a6a6a"></div>
<div class="abs" style="left:402px;top:586px;width:1px;height:28px;background:#6a6a6a"></div>
<div class="abs" style="left:574px;top:586px;width:1px;height:28px;background:#6a6a6a"></div>
<div class="abs" style="left:818px;top:586px;width:1px;height:28px;background:#6a6a6a"></div>
<div class="abs" style="left:49px;top:614px;width:770px;height:1px;background:#5a5a5a"></div>
<div class="abs" style="left:49px;top:615px;width:1509px;height:187px;overflow:hidden">
<div class="abs" style="left:29px;top:0px;width:740px;height:21px;background:#bdd9f0"></div>
<div class="abs" style="left:0;top:0px;width:29px;height:21px;background:#7cb9ec;border-bottom:1px solid #6a6a6a"></div>
<div class="cell" style="left:4px;top:0px">1</div>
<div class="abs" style="left:30px;top:0px;width:87px;height:21px;background:#6aaee6;border:1px solid #000;box-shadow:inset 0 0 0 1px #5a8fc0"></div>
<div class="cell" style="left:35px;top:0px;color:#fff">2022</div>
<div class="cell" style="left:123px;top:0px">01</div>
<div class="cell" style="left:205px;width:142px;text-align:right;top:0px">-63,534,157.38</div>
<div class="cell" style="left:353px;width:166px;text-align:right;top:0px">0</div>
<div class="cell" style="left:525px;width:238px;text-align:right;top:0px">-63,534,157.38</div>
<div class="abs" style="left:29px;top:21px;width:740px;height:21px;background:#ffffff"></div>
<div class="abs" style="left:0;top:21px;width:29px;height:21px;background:#f7f7f7;border-bottom:1px solid #6a6a6a"></div>
<div class="cell" style="left:4px;top:21px">2</div>
<div class="cell" style="left:35px;top:21px;">2022</div>
<div class="cell" style="left:123px;top:21px">02</div>
<div class="cell" style="left:205px;width:142px;text-align:right;top:21px">-23,675,714.04</div>
<div class="cell" style="left:353px;width:166px;text-align:right;top:21px">0</div>
<div class="cell" style="left:525px;width:238px;text-align:right;top:21px">-23,675,714.04</div>
<div class="abs" style="left:29px;top:42px;width:740px;height:21px;background:#dfebf7"></div>
<div class="abs" style="left:0;top:42px;width:29px;height:21px;background:#f7f7f7;border-bottom:1px solid #6a6a6a"></div>
<div class="cell" style="left:4px;top:42px">3</div>
<div class="cell" style="left:35px;top:42px;">2022</div>
<div class="cell" style="left:123px;top:42px">03</div>
<div class="cell" style="left:205px;width:142px;text-align:right;top:42px">-39,672,144.51</div>
<div class="cell" style="left:353px;width:166px;text-align:right;top:42px">0</div>
<div class="cell" style="left:525px;width:238px;text-align:right;top:42px">-39,672,144.51</div>
<div class="abs" style="left:29px;top:63px;width:740px;height:21px;background:#ffffff"></div>
<div class="abs" style="left:0;top:63px;width:29px;height:21px;background:#f7f7f7;border-bottom:1px solid #6a6a6a"></div>
<div class="cell" style="left:4px;top:63px">4</div>
<div class="cell" style="left:35px;top:63px;">2022</div>
<div class="cell" style="left:123px;top:63px">04</div>
<div class="cell" style="left:205px;width:142px;text-align:right;top:63px">-30,232,947.95</div>
<div class="cell" style="left:353px;width:166px;text-align:right;top:63px">0</div>
<div class="cell" style="left:525px;width:238px;text-align:right;top:63px">-30,232,947.95</div>
<div class="abs" style="left:29px;top:84px;width:740px;height:21px;background:#dfebf7"></div>
<div class="abs" style="left:0;top:84px;width:29px;height:21px;background:#f7f7f7;border-bottom:1px solid #6a6a6a"></div>
<div class="cell" style="left:4px;top:84px">5</div>
<div class="cell" style="left:35px;top:84px;">2022</div>
<div class="cell" style="left:123px;top:84px">05</div>
<div class="cell" style="left:205px;width:142px;text-align:right;top:84px">-23,550,267.64</div>
<div class="cell" style="left:353px;width:166px;text-align:right;top:84px">0</div>
<div class="cell" style="left:525px;width:238px;text-align:right;top:84px">-23,550,267.64</div>
<div class="abs" style="left:29px;top:105px;width:740px;height:21px;background:#ffffff"></div>
<div class="abs" style="left:0;top:105px;width:29px;height:21px;background:#f7f7f7;border-bottom:1px solid #6a6a6a"></div>
<div class="cell" style="left:4px;top:105px">6</div>
<div class="cell" style="left:35px;top:105px;">2022</div>
<div class="cell" style="left:123px;top:105px">06</div>
<div class="cell" style="left:205px;width:142px;text-align:right;top:105px">-67,428,682.95</div>
<div class="cell" style="left:353px;width:166px;text-align:right;top:105px">0</div>
<div class="cell" style="left:525px;width:238px;text-align:right;top:105px">-67,428,682.95</div>
<div class="abs" style="left:29px;top:126px;width:740px;height:21px;background:#dfebf7"></div>
<div class="abs" style="left:0;top:126px;width:29px;height:21px;background:#f7f7f7;border-bottom:1px solid #6a6a6a"></div>
<div class="cell" style="left:4px;top:126px">7</div>
<div class="cell" style="left:35px;top:126px;">2022</div>
<div class="cell" style="left:123px;top:126px">07</div>
<div class="cell" style="left:205px;width:142px;text-align:right;top:126px">-35,106,167.41</div>
<div class="cell" style="left:353px;width:166px;text-align:right;top:126px">0</div>
<div class="cell" style="left:525px;width:238px;text-align:right;top:126px">-35,106,167.41</div>
<div class="abs" style="left:29px;top:147px;width:740px;height:21px;background:#ffffff"></div>
<div class="abs" style="left:0;top:147px;width:29px;height:21px;background:#f7f7f7;border-bottom:1px solid #6a6a6a"></div>
<div class="cell" style="left:4px;top:147px">8</div>
<div class="cell" style="left:35px;top:147px;">2022</div>
<div class="cell" style="left:123px;top:147px">08</div>
<div class="cell" style="left:205px;width:142px;text-align:right;top:147px">-37,030,376.24</div>
<div class="cell" style="left:353px;width:166px;text-align:right;top:147px">0</div>
<div class="cell" style="left:525px;width:238px;text-align:right;top:147px">-37,030,376.24</div>
<div class="abs" style="left:29px;top:168px;width:740px;height:21px;background:#dfebf7"></div>
<div class="abs" style="left:0;top:168px;width:29px;height:21px;background:#f7f7f7;border-bottom:1px solid #6a6a6a"></div>
<div class="cell" style="left:4px;top:168px">9</div>
<div class="cell" style="left:35px;top:168px;">2022</div>
<div class="cell" style="left:123px;top:168px">09</div>
<div class="cell" style="left:205px;width:142px;text-align:right;top:168px">-63,789,888.92</div>
<div class="cell" style="left:353px;width:166px;text-align:right;top:168px">0</div>
<div class="cell" style="left:525px;width:238px;text-align:right;top:168px">-63,789,888.92</div>
<div class="abs" style="left:117px;top:0;width:1px;height:187px;background:rgba(255,255,255,0.55)"></div>
<div class="abs" style="left:205px;top:0;width:1px;height:187px;background:rgba(255,255,255,0.55)"></div>
<div class="abs" style="left:353px;top:0;width:1px;height:187px;background:rgba(255,255,255,0.55)"></div>
<div class="abs" style="left:525px;top:0;width:1px;height:187px;background:rgba(255,255,255,0.55)"></div>
</div>
<div class="abs" style="left:78px;top:586px;width:1px;height:216px;background:#5a5a5a"></div>
<div class="abs" style="left:819px;top:635px;width:739px;height:1px;background:#f6f6f6"></div>
<div class="abs" style="left:819px;top:656px;width:739px;height:1px;background:#f6f6f6"></div>
<div class="abs" style="left:819px;top:677px;width:739px;height:1px;background:#f6f6f6"></div>
<div class="abs" style="left:819px;top:698px;width:739px;height:1px;background:#f6f6f6"></div>
<div class="abs" style="left:819px;top:719px;width:739px;height:1px;background:#f6f6f6"></div>
<div class="abs" style="left:819px;top:740px;width:739px;height:1px;background:#f6f6f6"></div>
<div class="abs" style="left:819px;top:761px;width:739px;height:1px;background:#f6f6f6"></div>
<div class="abs" style="left:819px;top:782px;width:739px;height:1px;background:#f6f6f6"></div>
<div class="abs" style="left:819px;top:803px;width:739px;height:1px;background:#f6f6f6"></div>
<div class="abs" style="left:1558px;top:586px;width:15px;height:216px;background:#fafafa"></div>
<div class="abs" style="left:1558px;top:603px;width:15px;height:37px;background:#cdcfcc"></div>
<svg style="left:1561px;top:592px" width="9" height="6" viewBox="0 0 9 6"><path d="M0.700 5.500L4.500 1.500l3.800 4" fill="none" stroke="#404040" stroke-width="1.800"/></svg>
<svg style="left:1561px;top:790px" width="9" height="6" viewBox="0 0 9 6"><path d="M0.700 0.500L4.500 4.500l3.800-4" fill="none" stroke="#404040" stroke-width="1.800"/></svg>
<div class="abs" style="left:1574px;top:586px;width:25px;height:248px;background:#f7f7f7"></div>
<svg style="left:1579px;top:594px" width="15" height="16" viewBox="0 0 15 16"><rect x="1.700" y="1.700" width="12.300" height="12.300" fill="#6fd0f5" stroke="#1a8ccf" stroke-width="1.500"/><rect x="2.500" y="2.500" width="4.500" height="6.500" fill="#fff"/><circle cx="3.800" cy="12.300" r="3.300" fill="#1a8ccf"/><circle cx="3.800" cy="12.300" r="1.200" fill="#fff"/></svg>
<div class="t" style="left:1586px;top:622px;width:0;height:0"><div style="position:absolute;left:-30px;top:-8px;width:60px;height:16px;line-height:16px;text-align:center;transform:rotate(90deg)">面板</div></div>
<svg style="left:1578px;top:653px" width="14" height="13" viewBox="0 0 14 13"><rect x="0.700" y="0.700" width="12.600" height="11.600" fill="#fff" stroke="#1a8ccf" stroke-width="1.300"/><path d="M2 3h2v2H2zM6 3h2v2H6zM10 3h2v2h-2zM4 5h2v2H4zM8 5h2v2H8zM2 7h2v2H2zM6 7h2v2H6zM10 7h2v2h-2z" fill="#1a8ccf"/></svg>
<svg style="left:1578px;top:675px" width="14" height="14" viewBox="0 0 14 14"><circle cx="7" cy="7" r="6.200" fill="#fff" stroke="#1a8ccf" stroke-width="1.300"/><circle cx="4.800" cy="5" r="1.100" fill="#1a8ccf"/><circle cx="9.200" cy="5" r="1.100" fill="#1a8ccf"/><circle cx="4.800" cy="9" r="1.100" fill="#1a8ccf"/><circle cx="9.200" cy="9" r="1.100" fill="#1a8ccf"/></svg>
<svg style="left:1578px;top:696px" width="14" height="15" viewBox="0 0 14 15"><rect x="0.700" y="4" width="12.600" height="10" fill="#fff" stroke="#1a8ccf" stroke-width="1.300"/><path d="M0.700 7.500h12.600M0.700 10.800h12.600M5 4v10M9.200 4v10" stroke="#1a8ccf" stroke-width="1.100"/><rect x="4" y="2" width="5" height="7" fill="#f5820a"/><rect x="6" y="0" width="1.300" height="3" fill="#f5820a"/></svg>
<svg style="left:1578px;top:718px" width="14" height="15" viewBox="0 0 14 15"><rect x="0.700" y="0.700" width="12.600" height="9.600" fill="#fff" stroke="#1a8ccf" stroke-width="1.300"/><rect x="0.700" y="0.700" width="12.600" height="3" fill="#1a8ccf"/><path d="M0.700 13.500h5M8 13.500h5.300M10 7h4" stroke="#1a8ccf" stroke-width="1.300"/></svg>
<svg style="left:1578px;top:740px" width="14" height="14" viewBox="0 0 14 14"><circle cx="3.200" cy="3.200" r="2.500" fill="none" stroke="#1a8ccf" stroke-width="1.300"/><circle cx="10.800" cy="3.200" r="2.500" fill="none" stroke="#1a8ccf" stroke-width="1.300"/><circle cx="3.200" cy="10.800" r="2.500" fill="none" stroke="#1a8ccf" stroke-width="1.300"/><circle cx="10.800" cy="10.800" r="2.500" fill="#f5820a"/><path d="M2 10l2.500 1.800M2 11.800l2.500-1.800" stroke="#1a8ccf" stroke-width=".8"/></svg>
<div class="abs" style="left:24px;top:802px;width:1575px;height:31px;background:#f7f7f7"></div>
<div class="abs" style="left:24px;top:833px;width:1575px;height:1px;background:#dcdcdc"></div>
<svg style="left:60px;top:809px" width="15" height="15" viewBox="0 0 15 15"><path d="M2 9.500l-1-5 4-3.500 4.500 1.500" fill="none" stroke="#1a8ccf" stroke-width="1.700"/><path d="M13 5.500l1 5-4 3.500-4.500-1.500" fill="none" stroke="#1a8ccf" stroke-width="1.700"/><path d="M4 8a3.500 3.500 0 0 1 6-2M11 7a3.500 3.500 0 0 1-6 2" fill="none" stroke="#1a8ccf" stroke-width="1.300"/></svg>
<div class="t" style="left:79px;top:810px;">刷新</div>
<svg style="left:118.0px;top:816.0px" width="7" height="4"><polygon points="0,0 7,0 3.5,4" fill="#1a1a1a"/></svg>
<div class="abs" style="left:134px;top:811px;width:2px;height:2px;background:#b5ab96"></div><div class="abs" style="left:134px;top:815px;width:2px;height:2px;background:#b5ab96"></div><div class="abs" style="left:134px;top:819px;width:2px;height:2px;background:#b5ab96"></div><div class="abs" style="left:134px;top:823px;width:2px;height:2px;background:#b5ab96"></div>
<svg style="left:145px;top:810px" width="15" height="15" viewBox="0 0 15 15"><circle cx="7.500" cy="7.500" r="6.500" fill="none" stroke="#a8a8a8" stroke-width="1.300"/><path d="M4 7.500l2.700 2.700L11 5.500" fill="none" stroke="#a8a8a8" stroke-width="1.300"/></svg>
<div class="t" style="left:166px;top:810px;color:#a6a6a6">保存</div>
<svg style="left:204.0px;top:816.0px" width="7" height="4"><polygon points="0,0 7,0 3.5,4" fill="#555"/></svg>
<svg style="left:221px;top:811px" width="12" height="12" viewBox="0 0 12 12"><rect x="0.500" y="0.500" width="11" height="11" fill="none" stroke="#a8a8a8" stroke-width="1"/><path d="M3 3l6 6M9 3l-6 6" stroke="#a8a8a8" stroke-width="1"/></svg>
<div class="t" style="left:239px;top:810px;color:#a6a6a6">取消</div>
<div class="abs" style="left:273px;top:805px;width:1px;height:26px;background:#8c8c8c"></div>
<svg style="left:284px;top:811px" width="15" height="13" viewBox="0 0 15 13"><path d="M0 1.500h14M0 6h9M0 10.500h6" stroke="#1a8ccf" stroke-width="2"/><path d="M8 12.500l6-6" stroke="#1a8ccf" stroke-width="2.300"/></svg>
<svg style="left:308px;top:811px" width="15" height="13" viewBox="0 0 15 13"><path d="M0 1.500h14M0 6h8" stroke="#a0a0a0" stroke-width="2"/><path d="M0 10.500h7M11 6v7M7.500 9.500h7" stroke="#a0a0a0" stroke-width="1.900"/></svg>
<svg style="left:332px;top:811px" width="15" height="13" viewBox="0 0 15 13"><path d="M0 1.500h14M0 6h3M0 10.500h3" stroke="#a0a0a0" stroke-width="2"/><rect x="5" y="5" width="9" height="7" rx="2" fill="none" stroke="#a0a0a0" stroke-width="1.100"/><path d="M9.500 6.500v4M7.500 8.500h4" stroke="#a0a0a0" stroke-width="1"/></svg>
<svg style="left:356px;top:811px" width="15" height="13" viewBox="0 0 15 13"><path d="M0 1.500h14M0 6h7M0 10.500h7M9 8.500h6" stroke="#a0a0a0" stroke-width="2"/></svg>
<div class="abs" style="left:379px;top:811px;width:2px;height:2px;background:#b5ab96"></div><div class="abs" style="left:379px;top:815px;width:2px;height:2px;background:#b5ab96"></div><div class="abs" style="left:379px;top:819px;width:2px;height:2px;background:#b5ab96"></div><div class="abs" style="left:379px;top:823px;width:2px;height:2px;background:#b5ab96"></div>
<svg style="left:388px;top:810px" width="12" height="14" viewBox="0 0 12 14"><path d="M1 0v14" stroke="#a0a0a0" stroke-width="2.200"/><path d="M11 0.700L4.500 7l6.500 6.300" fill="none" stroke="#a0a0a0" stroke-width="2.200"/></svg>
<svg style="left:413px;top:810px" width="9" height="14" viewBox="0 0 9 14"><path d="M8 0.700L1.500 7 8 13.300" fill="none" stroke="#a0a0a0" stroke-width="2.200"/></svg>
<svg style="left:437px;top:810px" width="9" height="14" viewBox="0 0 9 14"><path d="M1 0.700L7.500 7 1 13.300" fill="none" stroke="#1a8ccf" stroke-width="2.200"/></svg>
<svg style="left:458px;top:810px" width="12" height="14" viewBox="0 0 12 14"><path d="M11 0v14" stroke="#1a8ccf" stroke-width="2.200"/><path d="M1 0.700L7.500 7 1 13.300" fill="none" stroke="#1a8ccf" stroke-width="2.200"/></svg>
<svg style="left:479px;top:810px" width="14" height="14" viewBox="0 0 14 14"><path d="M4 0.500H0.500V4M10 0.500h3.500V4M13.500 10v3.500H10M4 13.500H0.500V10" fill="none" stroke="#a0a0a0" stroke-width="1.200"/><path d="M4.500 3.500h3.500l1.500 1.500v5.500h-5z" fill="none" stroke="#a0a0a0" stroke-width="1"/></svg>
<div class="abs" style="left:502px;top:811px;width:2px;height:2px;background:#b5ab96"></div><div class="abs" style="left:502px;top:815px;width:2px;height:2px;background:#b5ab96"></div><div class="abs" style="left:502px;top:819px;width:2px;height:2px;background:#b5ab96"></div><div class="abs" style="left:502px;top:823px;width:2px;height:2px;background:#b5ab96"></div>
<svg style="left:518px;top:810px" width="13" height="14" viewBox="0 0 13 14"><path d="M6.500 10V1.500M3 5l3.500-3.500L10 5" fill="none" stroke="#1a8ccf" stroke-width="1.500"/><path d="M0.700 9v4.300h11.600V9" fill="none" stroke="#1a8ccf" stroke-width="1.400"/></svg>
<div class="t" style="left:536px;top:810px;;letter-spacing:-0.2526px">导出数据...</div>
<svg style="left:608.0px;top:816.0px" width="7" height="4"><polygon points="0,0 7,0 3.5,4" fill="#1a1a1a"/></svg>
<div class="abs" style="left:624px;top:811px;width:2px;height:2px;background:#b5ab96"></div><div class="abs" style="left:624px;top:815px;width:2px;height:2px;background:#b5ab96"></div><div class="abs" style="left:624px;top:819px;width:2px;height:2px;background:#b5ab96"></div><div class="abs" style="left:624px;top:823px;width:2px;height:2px;background:#b5ab96"></div>
<svg style="left:631px;top:810px" width="15" height="15" viewBox="0 0 15 15"><g transform="translate(7.500 7.500)"><rect x="-1.700" y="-7.500" width="3.400" height="4" fill="#1a8ccf" transform="rotate(0)"/><rect x="-1.700" y="-7.500" width="3.400" height="4" fill="#1a8ccf" transform="rotate(45)"/><rect x="-1.700" y="-7.500" width="3.400" height="4" fill="#1a8ccf" transform="rotate(90)"/><rect x="-1.700" y="-7.500" width="3.400" height="4" fill="#1a8ccf" transform="rotate(135)"/><rect x="-1.700" y="-7.500" width="3.400" height="4" fill="#1a8ccf" transform="rotate(180)"/><rect x="-1.700" y="-7.500" width="3.400" height="4" fill="#1a8ccf" transform="rotate(225)"/><rect x="-1.700" y="-7.500" width="3.400" height="4" fill="#1a8ccf" transform="rotate(270)"/><rect x="-1.700" y="-7.500" width="3.400" height="4" fill="#1a8ccf" transform="rotate(315)"/><circle r="5.500" fill="#1a8ccf"/><path d="M0-3L3 0 0 3-3 0z" fill="#7cc6ee"/></g></svg>
<div class="abs" style="left:654px;top:806px;width:54px;height:23px;background:#fff;border:1px solid #7a7a7a"></div>
<div class="t" style="left:659px;top:809px;">200</div>
<svg style="left:715px;top:810px" width="15" height="14" viewBox="0 0 15 14"><path d="M2 0.700l5.500 5 5.500-5M7.500 5.500v5" fill="none" stroke="#1a8ccf" stroke-width="1.400"/><path d="M5 8.500l2.500 2.500 2.500-2.500" fill="none" stroke="#1a8ccf" stroke-width="1.200"/><path d="M0.700 8v5.300h13.600V8" fill="none" stroke="#1a8ccf" stroke-width="1.400"/></svg>
<div class="t" style="left:737px;top:809px;">42</div>
<div class="abs" style="left:758px;top:811px;width:2px;height:2px;background:#b5ab96"></div><div class="abs" style="left:758px;top:815px;width:2px;height:2px;background:#b5ab96"></div><div class="abs" style="left:758px;top:819px;width:2px;height:2px;background:#b5ab96"></div><div class="abs" style="left:758px;top:823px;width:2px;height:2px;background:#b5ab96"></div>
<div class="abs" style="left:787px;top:816px;width:1px;height:1px;background:#555"></div>
<div class="abs" style="left:790px;top:816px;width:1px;height:1px;background:#555"></div>
<div class="abs" style="left:793px;top:816px;width:1px;height:1px;background:#555"></div>
<div class="t" style="left:805px;top:809px;;letter-spacing:0.3088px">42 行已获取 - 1.499s, 2025-10-21 20:46:55</div>
<svg style="left:1578px;top:815px" width="15" height="16" viewBox="0 0 15 16"><path d="M1 4.500v10.500h4V4.500z" fill="#1a8ccf"/><path d="M7 14.500h6.500V8" fill="none" stroke="#1a8ccf" stroke-width="1.500"/><path d="M7 6c1-3 4-4 6-2" fill="none" stroke="#1a8ccf" stroke-width="1.400"/><path d="M12 1l2.500 3.500-4 .5z" fill="#1a8ccf"/></svg>
<div class="abs" style="left:0px;top:834px;width:1600px;height:26px;background:#f7f7f7"></div>
<div class="abs" style="left:778px;top:834px;width:1px;height:23px;background:#a8a8a8"></div>
<div class="abs" style="left:814px;top:834px;width:1px;height:23px;background:#a8a8a8"></div>
<div class="abs" style="left:841px;top:834px;width:1px;height:23px;background:#a8a8a8"></div>
<div class="abs" style="left:975px;top:834px;width:1px;height:23px;background:#a8a8a8"></div>
<div class="abs" style="left:1103px;top:834px;width:1px;height:23px;background:#a8a8a8"></div>
<div class="abs" style="left:1231px;top:834px;width:1px;height:23px;background:#a8a8a8"></div>
<div class="t" style="left:786px;top:837px;;letter-spacing:-1.2000px">CST</div>
<div class="t" style="left:822px;top:837px;">zh</div>
<div class="t" style="left:849px;top:837px;">可写</div>
<div class="t" style="left:983px;top:837px;">智能插入</div>
<div class="t" style="left:1111px;top:837px;;letter-spacing:0.3500px">1719 : 1 : 76366</div>
<div class="t" style="left:1239px;top:837px;;letter-spacing:0.2049px">Sel: 0 | 0</div>
<div class="abs" style="left:1316px;top:838px;width:2px;height:2px;background:#b5ab96"></div><div class="abs" style="left:1316px;top:842px;width:2px;height:2px;background:#b5ab96"></div><div class="abs" style="left:1316px;top:846px;width:2px;height:2px;background:#b5ab96"></div><div class="abs" style="left:1316px;top:850px;width:2px;height:2px;background:#b5ab96"></div><div class="abs" style="left:1316px;top:854px;width:2px;height:2px;background:#b5ab96"></div>
<div class="abs" style="left:0px;top:860px;width:1600px;height:40px;background:#000"></div>
<svg style="left:16px;top:872px" width="16" height="16" viewBox="0 0 16 16"><path d="M0 2.300l6.500-.9v6.100H0zM7.500 1.300L16 0v7.500H7.500zM0 8.500h6.500v6.100L0 13.700zM7.500 8.500H16V16l-8.500-1.300z" fill="#fff"/></svg>
<svg style="left:63px;top:870px" width="18" height="19" viewBox="0 0 18 19"><circle cx="11.500" cy="6.500" r="5.500" fill="none" stroke="#fff" stroke-width="1.400"/><path d="M7.500 10.500L1 18" stroke="#fff" stroke-width="1.400"/></svg>
<svg style="left:111px;top:872px" width="18" height="16" viewBox="0 0 18 16"><path d="M0.500 0.500h11M0.500 15.500h11" stroke="#fff" stroke-width="1"/><rect x="1.500" y="3.500" width="9" height="9" fill="none" stroke="#fff" stroke-width="1.200"/><path d="M15 0v3M15 5.500v10.500" stroke="#fff" stroke-width="1.400"/></svg>
<svg style="left:159px;top:867px" width="25" height="25" viewBox="0 0 25 25"><circle cx="12.500" cy="13.500" r="10" fill="#35b2ee"/><circle cx="12.500" cy="13.500" r="4.800" fill="#000"/><rect x="4" y="12.200" width="17" height="3.200" fill="#35b2ee"/><path d="M12.500 15.400h10.500v3.500h-6.500z" fill="#000"/><path d="M2.500 22.500C-1 19 6 7 15 3c5-2.300 8.500-1.500 8 1.500" fill="none" stroke="#f0c22a" stroke-width="1.900"/><path d="M2.500 22.500c1.500 1 4 .3 6.500-1.200" fill="none" stroke="#f0c22a" stroke-width="1.600"/></svg>
<svg style="left:209px;top:871px" width="22" height="18" viewBox="0 0 22 18"><path d="M0 1h7.500l1.500 1.800h12V18H0z" fill="#f3c95a"/><path d="M0 4h21v14H0z" fill="#ffe495"/><path d="M4 10.200h13.200V18h-3.700v-4.200h-5.800V18H4z" fill="#3a9fe6"/><rect x="1" y="1.800" width="5" height="1" fill="#fff8d8"/></svg>
<svg style="left:256px;top:867px" width="26" height="26" viewBox="0 0 26 26"><circle cx="13" cy="13" r="11.100" fill="#fbfbfb" stroke="#3fa9ab" stroke-width="1.700"/><path d="M9.500 23.300L10.300 17.500 13 12.800 15 15 17.300 11.500 18.600 16.500 16.300 20.500 17 23z" fill="#2d2622"/><ellipse cx="17.600" cy="9.300" rx="1.900" ry="1.300" fill="#2d2622"/><path d="M7.500 10.500c1.500-2.500 4-4 7-4M6.500 15c0-1.500.5-3 1-4" fill="none" stroke="#8a8580" stroke-width=".7"/><circle cx="13.300" cy="8.800" r=".55" fill="#2d2622"/></svg>
<div class="abs" style="left:294px;top:860px;width:48px;height:40px;background:#333"></div>
<div class="abs" style="left:294px;top:898px;width:48px;height:2px;background:#76b9ed"></div>
<svg style="left:305px;top:867px" width="26" height="26" viewBox="0 0 26 26"><circle cx="13" cy="13" r="11.100" fill="#fbfbfb" stroke="#3fa9ab" stroke-width="1.700"/><path d="M9.500 23.300L10.300 17.500 13 12.800 15 15 17.300 11.500 18.600 16.500 16.300 20.500 17 23z" fill="#2d2622"/><ellipse cx="17.600" cy="9.300" rx="1.900" ry="1.300" fill="#2d2622"/><path d="M7.500 10.500c1.500-2.500 4-4 7-4M6.500 15c0-1.500.5-3 1-4" fill="none" stroke="#8a8580" stroke-width=".7"/><circle cx="13.300" cy="8.800" r=".55" fill="#2d2622"/></svg>
<svg style="left:1348px;top:876px" width="13" height="8" viewBox="0 0 13 8"><path d="M0.500 7.300L6.500 1.300l6 6" fill="none" stroke="#fff" stroke-width="1.300"/></svg>
<svg style="left:1373px;top:872px" width="13" height="17" viewBox="0 0 13 17"><rect x="2.500" y="0.500" width="6" height="4" fill="none" stroke="#fff" stroke-width="1"/><rect x="1" y="4.500" width="9" height="10.500" rx="1" fill="none" stroke="#fff" stroke-width="1"/><path d="M8 13l2 2 3-4" fill="none" stroke="#fff" stroke-width="1"/></svg>
<svg style="left:1394px;top:874px" width="17" height="14" viewBox="0 0 17 14"><rect x="3.500" y="0.500" width="13" height="9" fill="none" stroke="#fff" stroke-width="1"/><path d="M10 9.500v3.500M6 13.500h8" stroke="#fff" stroke-width="1"/><rect x="0.500" y="1.500" width="4" height="4" fill="#000" stroke="#fff" stroke-width="1"/><path d="M2.500 5.500v7h4" fill="none" stroke="#fff" stroke-width="1"/></svg>
<svg style="left:1418px;top:873px" width="17" height="15" viewBox="0 0 17 15"><path d="M0.500 5h3l4-4v13l-4-4h-3z" fill="none" stroke="#fff" stroke-width="1"/><path d="M9.500 5a3.500 3.500 0 0 1 0 5M11.500 3a6 6 0 0 1 0 9M13.500 1a9 9 0 0 1 0 13" fill="none" stroke="#fff" stroke-width="1"/></svg>
<div class="t" style="left:1443.4px;top:872px;color:#fff;letter-spacing:-0.5078px">ENG</div>
<div class="t" style="left:1495px;top:864px;color:#fff">20:47</div>
<div class="t" style="left:1477px;top:882px;color:#fff;letter-spacing:0.4819px">2025/10/21</div>
<svg style="left:1559px;top:872px" width="17" height="15" viewBox="0 0 17 15"><path d="M0.500 0.500h15v11h-9l-3 3v-3h-3z" fill="#fff"/><path d="M3 3.500h10M3 6h10M3 8.500h7" stroke="#000" stroke-width="1"/></svg>
<svg style="left:1566px;top:879px" width="17" height="17" viewBox="0 0 17 17"><circle cx="8.500" cy="8.500" r="7.500" fill="#2a2a2a" stroke="#5a5a5a" stroke-width="1"/><text x="8.500" y="12.500" font-size="11" font-weight="bold" fill="#fff" text-anchor="middle" font-family="Liberation Sans,sans-serif">3</text></svg>
<div class="abs" style="left:1595px;top:860px;width:1px;height:40px;background:#666"></div>
<div class="abs" style="left:0;top:75px;width:1600px;height:783px;overflow:hidden;pointer-events:none">
<div class="wm" style="left:6.7px;top:56.8px">audit审计01(Audit1)<br>audit-172.18.210.237</div>
<div class="wm" style="left:306.7px;top:56.8px">audit审计01(Audit1)<br>audit-172.18.210.237</div>
<div class="wm" style="left:606.7px;top:56.8px">audit审计01(Audit1)<br>audit-172.18.210.237</div>
<div class="wm" style="left:906.7px;top:56.8px">audit审计01(Audit1)<br>audit-172.18.210.237</div>
<div class="wm" style="left:1206.7px;top:56.8px">audit审计01(Audit1)<br>audit-172.18.210.237</div>
<div class="wm" style="left:1506.7px;top:56.8px">audit审计01(Audit1)<br>audit-172.18.210.237</div>
<div class="wm" style="left:6.7px;top:356.8px">audit审计01(Audit1)<br>audit-172.18.210.237</div>
<div class="wm" style="left:306.7px;top:356.8px">audit审计01(Audit1)<br>audit-172.18.210.237</div>
<div class="wm" style="left:606.7px;top:356.8px">audit审计01(Audit1)<br>audit-172.18.210.237</div>
<div class="wm" style="left:906.7px;top:356.8px">audit审计01(Audit1)<br>audit-172.18.210.237</div>
<div class="wm" style="left:1206.7px;top:356.8px">audit审计01(Audit1)<br>audit-172.18.210.237</div>
<div class="wm" style="left:1506.7px;top:356.8px">audit审计01(Audit1)<br>audit-172.18.210.237</div>
<div class="wm" style="left:6.7px;top:656.8px">audit审计01(Audit1)<br>audit-172.18.210.237</div>
<div class="wm" style="left:306.7px;top:656.8px">audit审计01(Audit1)<br>audit-172.18.210.237</div>
<div class="wm" style="left:606.7px;top:656.8px">audit审计01(Audit1)<br>audit-172.18.210.237</div>
<div class="wm" style="left:906.7px;top:656.8px">audit审计01(Audit1)<br>audit-172.18.210.237</div>
<div class="wm" style="left:1206.7px;top:656.8px">audit审计01(Audit1)<br>audit-172.18.210.237</div>
<div class="wm" style="left:1506.7px;top:656.8px">audit审计01(Audit1)<br>audit-172.18.210.237</div>
</div>
</body></html>
